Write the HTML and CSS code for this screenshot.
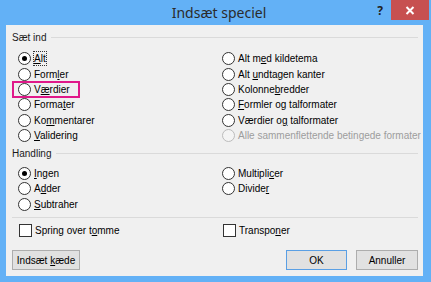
FILE: index.html
```html
<!DOCTYPE html>
<html lang="da">
<head>
    <meta charset="UTF-8">
    <meta name="viewport" content="width=device-width, initial-scale=1.0">
    <title>Indsæt speciel</title>
    <link rel="stylesheet" href="styles.css">
</head>
<body>

<div class="window">
    <div class="titlebar">
        <span></span>
        <span class="title">Indsæt speciel</span>
        <div class="caption-buttons">
            <span class="help">?</span>
            <span class="close">
                <svg width="10" height="9" viewBox="0 0 10 9">
                    <path d="M1.5 1 L8.5 8 M8.5 1 L1.5 8" stroke="#fff" stroke-width="2" fill="none"/>
                </svg>
            </span>
        </div>
    </div>

    <div class="panel">
        <div class="legend"><span>Sæt ind</span></div>
        <div class="options paste">
            <div class="col">
                <div class="row"><span class="radio checked"></span><span class="label focus"><u>A</u>lt</span></div>
                <div class="row"><span class="radio"></span><span class="label">Form<u>l</u>er</span></div>
                <div class="row marked"><span class="radio"></span><span class="label">V<u>æ</u>rdier</span></div>
                <div class="row"><span class="radio"></span><span class="label">Forma<u>t</u>er</span></div>
                <div class="row"><span class="radio"></span><span class="label">Ko<u>m</u>mentarer</span></div>
                <div class="row"><span class="radio"></span><span class="label"><u>V</u>alidering</span></div>
            </div>
            <div class="col">
                <div class="row"><span class="radio"></span><span class="label">Alt m<u>e</u>d kildetema</span></div>
                <div class="row"><span class="radio"></span><span class="label">Alt <u>u</u>ndtagen kanter</span></div>
                <div class="row"><span class="radio"></span><span class="label">Kolonne<u>b</u>redder</span></div>
                <div class="row"><span class="radio"></span><span class="label"><u>F</u>ormler og talformater</span></div>
                <div class="row"><span class="radio"></span><span class="label">Værdier o<u>g</u> talformater</span></div>
                <div class="row disabled"><span class="radio"></span><span class="label">Alle sammenflettende betingede formater</span></div>
            </div>
        </div>

        <div class="legend second"><span>Handling</span></div>
        <div class="options operation">
            <div class="col">
                <div class="row"><span class="radio checked"></span><span class="label"><u>I</u>ngen</span></div>
                <div class="row"><span class="radio"></span><span class="label">A<u>d</u>der</span></div>
                <div class="row"><span class="radio"></span><span class="label"><u>S</u>ubtraher</span></div>
            </div>
            <div class="col">
                <div class="row"><span class="radio"></span><span class="label">Multipli<u>c</u>er</span></div>
                <div class="row"><span class="radio"></span><span class="label">Divide<u>r</u></span></div>
            </div>
        </div>

        <div class="separator"></div>
        <div class="options checks">
            <div class="row"><span class="checkbox"></span><span class="label">Spring over t<u>o</u>mme</span></div>
            <div class="row"><span class="checkbox"></span><span class="label">Transpo<u>n</u>er</span></div>
        </div>

        <div class="button-row">
            <button class="btn link">Indsæt <u>k</u>æde</button>
            <span class="spacer"></span>
            <button class="btn ok">OK</button>
            <button class="btn">Annuller</button>
        </div>
    </div>
</div>

</body>
</html>
```

FILE: styles.css
```css
body {
    margin: 0;
    font-family: "Liberation Sans", Arial, sans-serif;
    font-size: 10px;
    color: #000000;
    background-color: #63b1f6;
}
.window {
    width: 431px;
    height: 282px;
    display: flex;
    flex-direction: column;
    box-sizing: border-box;
    padding: 0 8px 6px 6px;
}
.titlebar {
    height: 25px;
    display: grid;
    grid-template-columns: 1fr auto 1fr;
    margin-right: -6px;
}
.title {
    font-family: "Noto Sans", sans-serif;
    font-size: 14px;
    color: #2b2b2b;
    line-height: 25px;
    padding-left: 3px;
}
.caption-buttons {
    display: flex;
    justify-content: flex-end;
    align-items: flex-start;
}
.help {
    font-family: "Noto Sans", sans-serif;
    font-size: 12px;
    font-weight: bold;
    color: #222222;
    line-height: 22px;
    margin-right: 8px;
}
.close {
    width: 38px;
    height: 20px;
    background-color: #c75050;
    display: flex;
    align-items: center;
    justify-content: center;
}
.panel {
    flex: 1;
    background-color: #f0f0f0;
    padding: 0 5px 0 6px;
    display: flex;
    flex-direction: column;
}
.legend {
    display: flex;
    align-items: center;
    height: 15px;
    margin-top: 5px;
    color: #1a1a1a;
}
.legend::after {
    content: "";
    flex: 1;
    height: 1px;
    background-color: #dadada;
    margin-left: 5px;
}
.legend.second {
    margin-top: 3px;
}
.options {
    display: grid;
    grid-template-columns: 204px 1fr;
    padding-left: 6px;
}
.paste {
    margin-top: 6px;
}
.operation {
    margin-top: 4.5px;
}
.row {
    height: 15.4px;
    display: flex;
    align-items: center;
}
.radio {
    width: 11px;
    height: 11px;
    border: 1px solid #333333;
    border-radius: 50%;
    background-color: #ffffff;
    margin-right: 3px;
    display: flex;
    align-items: center;
    justify-content: center;
    flex-shrink: 0;
}
.radio.checked::after {
    content: "";
    width: 5px;
    height: 5px;
    border-radius: 50%;
    background-color: #000000;
}
.disabled .radio {
    border-color: #bcbcbc;
    background-color: #f4f4f4;
}
.disabled .label {
    color: #9d9d9d;
}
.checkbox {
    width: 11px;
    height: 11px;
    border: 1px solid #333333;
    background-color: #ffffff;
    margin: 0 3px 0 1px;
    flex-shrink: 0;
}
.label {
    white-space: nowrap;
    line-height: 13px;
}
.label u {
    text-underline-offset: 1px;
}
.focus {
    outline: 1px dotted #333333;
    outline-offset: 0;
}
.marked {
    outline: 2px solid #e0198a;
    outline-offset: -1px;
    margin-left: -5px;
    padding-left: 5px;
    width: 61px;
}
.separator {
    height: 1px;
    background-color: #dadada;
    margin: 4.5px 0 0 0;
}
.checks {
    margin-top: 5px;
}
.button-row {
    display: flex;
    margin-top: auto;
    margin-bottom: 6px;
    gap: 9px;
}
.spacer {
    flex: 1;
}
.btn {
    height: 20px;
    font-family: "Liberation Sans", Arial, sans-serif;
    font-size: 10px;
    color: #000000;
    background-color: #e1e1e1;
    border: 1px solid #adadad;
    padding: 0;
}
.link {
    width: 68px;
}
.ok {
    width: 61px;
    border-color: #5a9fe4;
}
.btn:last-child {
    width: 62px;
}
```
